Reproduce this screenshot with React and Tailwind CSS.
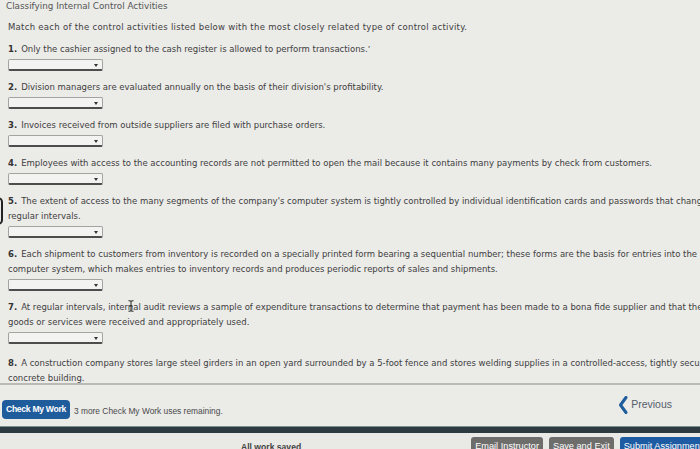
import React from "react";

// Text I-beam mouse cursor resting over a word
function IBeam() {
  return (
    <svg className="absolute -top-[2px] left-[0px]" width="6" height="12" viewBox="0 0 6 12">
      <path d="M0.5 0.8 H2.3 Q3 0.8 3 1.8 V10.2 Q3 11.2 2.3 11.2 H0.5 M5.5 0.8 H3.7 Q3 0.8 3 1.8 M3 10.2 Q3 11.2 3.7 11.2 H5.5 M1.5 6 H4.5" fill="none" stroke="#222" strokeWidth="1" />
    </svg>
  );
}

const questions = [
  { n: 1, lines: ["Only the cashier assigned to the cash register is allowed to perform transactions.\u02bc"] },
  { n: 2, lines: ["Division managers are evaluated annually on the basis of their division's profitability."] },
  { n: 3, lines: ["Invoices received from outside suppliers are filed with purchase orders."] },
  { n: 4, lines: ["Employees with access to the accounting records are not permitted to open the mail because it contains many payments by check from customers."] },
  {
    n: 5,
    lines: [
      "The extent of access to the many segments of the company's computer system is tightly controlled by individual identification cards and passwords that change at",
      "regular intervals.",
    ],
  },
  {
    n: 6,
    lines: [
      "Each shipment to customers from inventory is recorded on a specially printed form bearing a sequential number; these forms are the basis for entries into the",
      "computer system, which makes entries to inventory records and produces periodic reports of sales and shipments.",
    ],
  },
  {
    n: 7,
    gap: "mb-[12px]",
    lines: [
      <>
        At regular intervals, inter
        <span className="relative">
          nal
          <IBeam />
        </span>{" "}
        audit reviews a sample of expenditure transactions to determine that payment has been made to a bona fide supplier and that the
      </>,
      "goods or services were received and appropriately used.",
    ],
  },
  {
    n: 8,
    lines: [
      "A construction company stores large steel girders in an open yard surrounded by a 5-foot fence and stores welding supplies in a controlled-access, tightly secured",
      "concrete building.",
    ],
  },
];

function Select() {
  return (
    <div className="relative mt-[2px] h-[12px] w-[95px] rounded-[2px] border border-[#a3a3a0] border-b-2 border-b-[#4d4d4d] bg-[#f3f3f1]">
      <span className="absolute right-[4px] top-[4px] h-0 w-0 border-l-[2.5px] border-r-[2.5px] border-t-[3px] border-l-transparent border-r-transparent border-t-[#333]" />
    </div>
  );
}

function Question({ n, lines, gap }) {
  return (
    <div className={gap || "mb-[9px]"}>
      <div className="whitespace-nowrap leading-[15px]">
        {lines.map((line, i) => (
          <div key={i}>
            {i === 0 && <b className="mr-[4px] font-bold text-[#333]">{n}.</b>}
            {line}
          </div>
        ))}
      </div>
      <Select />
    </div>
  );
}

export default function App() {
  return (
    <div className="relative flex h-[449px] w-[700px] flex-col overflow-hidden bg-[#ebebe8] font-['DejaVu_Sans',sans-serif] text-[8.5px] text-[#404040]">
      {/* scrolling question area */}
      <div className="relative h-[383px] shrink-0 overflow-hidden px-[8px]">
        <div className="-ml-[2px] text-[8.8px] leading-[12px] text-[#555]">Classifying Internal Control Activities</div>
        <div className="mt-[8px] whitespace-nowrap leading-[15px] tracking-[0.28px]">
          Match each of the control activities listed below with the most closely related type of control activity.
        </div>
        <div className="mt-[7px]">
          {questions.map((q) => (
            <Question key={q.n} {...q} />
          ))}
        </div>
        {/* dark edge at the left */}
        <div className="absolute -left-[7px] top-[197px] h-[28px] w-[10px] rounded-full border-2 border-[#222]" />
      </div>

      {/* footer */}
      <div className="shrink-0 border-t-2 border-[#b9b9b6]">
        <div className="flex h-[41px] items-start pt-[15px]">
          <button className="ml-[2px] h-[19px] rounded-[4px] bg-[#1f5c9c] px-[4px] font-['Liberation_Sans',sans-serif] text-[8.6px] font-bold tracking-[-0.3px] text-white">
            Check My Work
          </button>
          <span className="ml-[4px] mt-[5px] font-['Liberation_Sans',sans-serif] text-[8.4px] text-[#4a4a4a]">
            3 more Check My Work uses remaining.
          </span>
          <div className="ml-auto mr-[28px] -mt-[4px] flex items-center gap-[3px]">
            <svg width="10" height="18" viewBox="0 0 10 18">
              <path d="M8 1.5 L2.5 9 L8 16.5" fill="none" stroke="#1f5c9c" strokeWidth="3" strokeLinecap="round" strokeLinejoin="round" />
            </svg>
            <span className="font-['Liberation_Sans',sans-serif] text-[10.5px] text-[#55606a]">Previous</span>
          </div>
        </div>
        <div className="h-[7px] border-t border-[#7c8f92] bg-[#2d3b40]" />
        <div className="flex h-[20px] items-start overflow-hidden bg-[#e9e9e6] font-['Liberation_Sans',sans-serif]">
          <span className="ml-[241px] mt-[8px] whitespace-nowrap text-[8.6px] font-bold text-[#444]">All work saved</span>
          <div className="ml-[170px] mt-[4px] flex gap-[6px] whitespace-nowrap text-[9.2px] text-white">
            <span className="rounded-t-[3px] bg-[#6d6d6c] px-[4px] pt-[3px] pb-[6px]">Email Instructor</span>
            <span className="rounded-t-[3px] bg-[#6d6d6c] px-[4px] pt-[3px] pb-[6px]">Save and Exit</span>
            <span className="rounded-t-[3px] bg-[#1d5ca2] px-[4px] pt-[3px] pb-[6px]">Submit Assignment</span>
          </div>
        </div>
      </div>
    </div>
  );
}
